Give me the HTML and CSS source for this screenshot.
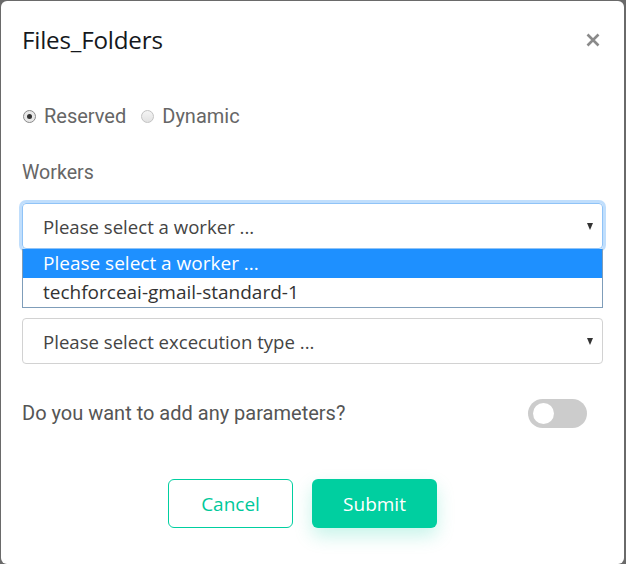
FILE: index.html
```html
<!DOCTYPE html>
<html>
<head>
<meta charset="utf-8">
<link rel="stylesheet" href="styles.css">
</head>
<body>
<div class="modal">
  <div class="header">
    <h1 class="title">Files_Folders</h1>
    <button class="close" aria-label="Close">
      <svg width="14" height="14" viewBox="0 0 14 14"><path d="M1.5 1.5 L12.5 12.5 M12.5 1.5 L1.5 12.5" stroke="#8a8a8a" stroke-width="2.6" stroke-linecap="butt"/></svg>
    </button>
  </div>
  <div class="radios">
    <label class="radio"><span class="dot checked"></span>Reserved</label>
    <label class="radio"><span class="dot"></span>Dynamic</label>
  </div>
  <div class="label">Workers</div>
  <div class="select-wrap">
    <div class="select focused">
      <span>Please select a worker ...</span>
      <span class="arrow"></span>
    </div>
    <ul class="options">
      <li class="option active">Please select a worker ...</li>
      <li class="option">techforceai-gmail-standard-1</li>
    </ul>
  </div>
  <div class="select second">
    <span>Please select excecution type ...</span>
    <span class="arrow"></span>
  </div>
  <div class="params">
    <span>Do you want to add any parameters?</span>
    <span class="toggle"><span class="knob"></span></span>
  </div>
  <div class="actions">
    <button class="btn cancel">Cancel</button>
    <button class="btn submit">Submit</button>
  </div>
</div>
</body>
</html>
```

FILE: styles.css
```css
html, body {
  margin: 0;
  padding: 0;
}
body {
  background: #6a6a6a;
  width: 626px;
  height: 564px;
  overflow: hidden;
}
.modal {
  margin: 1px 2px 0 1px;
  height: 563px;
  background: #fff;
  border-radius: 6px;
  box-sizing: border-box;
  padding: 0 21px;
  font-family: Roboto, "Liberation Sans", sans-serif;
}
.header {
  display: flex;
  justify-content: space-between;
  align-items: flex-start;
  padding-top: 21px;
}
.title {
  margin: 0;
  font-family: "Open Sans", "Noto Sans", sans-serif;
  font-weight: 500;
  font-size: 24.2px;
  line-height: 35px;
  color: #15181c;
  letter-spacing: -0.2px;
}
.close {
  border: 0;
  background: none;
  padding: 0;
  margin: 11px 3px 0 0;
  width: 14px;
  height: 14px;
  display: flex;
}
.radios {
  display: flex;
  gap: 14px;
  margin-top: 47px;
  height: 24px;
  align-items: center;
}
.radio {
  display: flex;
  align-items: center;
  font-size: 20px;
  color: #666;
}
.dot {
  width: 11px;
  height: 11px;
  border-radius: 50%;
  border: 1px solid #c3c3c3;
  background: linear-gradient(#f4f4f4, #e2e2e2);
  margin-right: 8px;
  margin-left: 1px;
  position: relative;
}
.dot.checked {
  border-color: #8a8a8a;
  background: #e8e8e8;
}
.dot.checked::after {
  content: "";
  position: absolute;
  left: 3px;
  top: 3px;
  width: 5px;
  height: 5px;
  border-radius: 50%;
  background: #333;
}
.label {
  margin-top: 33px;
  font-size: 19.6px;
  line-height: 24px;
  color: #666;
}
.select-wrap {
  position: relative;
  margin-top: 18px;
}
.select {
  height: 46px;
  box-sizing: border-box;
  border: 1px solid #d2d2d2;
  border-radius: 4px;
  display: flex;
  align-items: center;
  justify-content: space-between;
  padding: 0 9px 0 20px;
  font-family: "Open Sans", "Noto Sans", sans-serif;
  font-size: 18.6px;
  color: #444;
}
.select.focused {
  border-color: #8fc3f7;
  box-shadow: 0 0 0 3px rgba(150, 200, 250, 0.6);
}
.arrow {
  width: 0;
  height: 0;
  border-left: 3.5px solid transparent;
  border-right: 3.5px solid transparent;
  border-top: 7px solid #333;
}
.options {
  position: absolute;
  left: 0;
  right: 0;
  top: 46px;
  margin: 0;
  padding: 0;
  list-style: none;
  background: #fff;
  border: 1px solid #7f9db9;
  border-top: 0;
  font-family: "Open Sans", "Noto Sans", sans-serif;
  font-size: 19px;
  color: #333;
}
.option {
  height: 29px;
  line-height: 29px;
  padding-left: 20px;
}
.option.active {
  background: #1e90ff;
  color: #fff;
}
.second {
  margin-top: 69px;
}
.params {
  margin-top: 34px;
  height: 30px;
  display: flex;
  align-items: center;
  justify-content: space-between;
  font-size: 20px;
  color: #555;
  padding-right: 16px;
}
.toggle {
  width: 59px;
  height: 29px;
  border-radius: 15px;
  background: #cccccc;
  display: flex;
  align-items: center;
  padding-left: 5px;
  box-sizing: border-box;
}
.knob {
  width: 21px;
  height: 21px;
  border-radius: 50%;
  background: #fff;
}
.actions {
  margin-top: 51px;
  display: flex;
  justify-content: center;
  gap: 19px;
  padding-right: 20px;
}
.btn {
  width: 125px;
  height: 49px;
  border-radius: 6px;
  font-family: "Open Sans", "Noto Sans", sans-serif;
  font-size: 19px;
  box-sizing: border-box;
  cursor: pointer;
}
.cancel {
  background: #fff;
  border: 1px solid #00cfa0;
  color: #00c89a;
}
.submit {
  background: #00cfa0;
  border: 0;
  color: #fff;
  box-shadow: 0 8px 18px rgba(0, 207, 160, 0.22);
}
```
